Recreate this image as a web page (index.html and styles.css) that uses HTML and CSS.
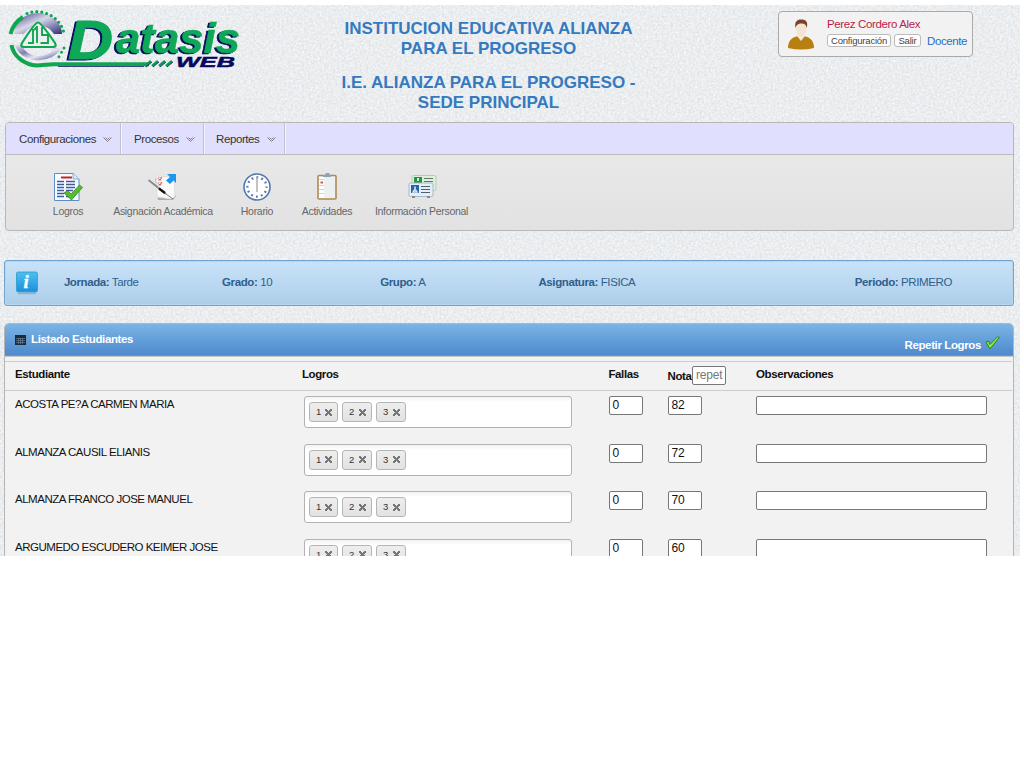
FILE: index.html
```html
<!DOCTYPE html>
<html lang="es">
<head>
<meta charset="utf-8">
<title>Datasis Web</title>
<link rel="stylesheet" href="styles.css">
</head>
<body>
<div class="page">
<svg class="texture" width="1020" height="551"><filter id="grain" x="0" y="0" width="100%" height="100%" color-interpolation-filters="sRGB"><feTurbulence type="fractalNoise" baseFrequency="0.45" numOctaves="2" seed="4"/><feColorMatrix values="0.14 0 0 0 0.850  0.14 0 0 0 0.860  0.14 0 0 0 0.868  0 0 0 0 1"/></filter><rect width="1020" height="551" filter="url(#grain)"/></svg>
<header class="top">
  <svg class="logo" width="250" height="70" viewBox="0 5 250 70">
    <defs><linearGradient id="steel" x1="0" y1="0" x2="1" y2="1"><stop offset="0" stop-color="#3a3a82"/><stop offset=".45" stop-color="#d8d8ea"/><stop offset="1" stop-color="#2c2c78"/></linearGradient>
    <linearGradient id="steel2" x1="0" y1="0" x2="1" y2="1"><stop offset="0" stop-color="#e4e2ee"/><stop offset=".35" stop-color="#8080b0"/><stop offset=".6" stop-color="#e4e4f2"/><stop offset="1" stop-color="#34347c"/></linearGradient></defs>
    <path d="M14 34A24 21 0 0 1 62 34H54A17 15 0 0 0 24 34Z" fill="url(#steel)"/>
    <path d="M15 45H22A17 14 0 0 0 54 48L61 48A24 19 0 0 1 15 45Z" fill="url(#steel2)"/>
    <path d="M10.500 34A28 28 0 0 1 23 17" fill="none" stroke="#10a650" stroke-width="4"/>
    <path d="M11.500 45A28 24 0 0 0 37 65.500Q46 64.500 54 64.200H149" fill="none" stroke="#10a650" stroke-width="4"/>
    <path d="M58 66.500H144" stroke="#07075f" stroke-width=".7"/>
    <path d="M27 13.500A28 28 0 0 1 64 33" fill="none" stroke="#10a650" stroke-width="3.200" stroke-dasharray="0 5" stroke-linecap="round"/>
    <path d="M64 48L57 60" stroke="#10a650" stroke-width="3" stroke-dasharray="0 5" stroke-linecap="round"/>
    <path d="M38 22.500Q41 22.500 55 43Q57 47 53 47H24Q20 47 22 43Q35 22.500 38 22.500Z" fill="#eceef0" stroke="#10a650" stroke-width="2.200" stroke-linejoin="round"/>
    <path d="M28 43H33V29M37 43V26M40.500 43H48V35H42V27M37 27L34 30" fill="none" stroke="#10a650" stroke-width="1.900"/>
    <path d="M145 66l6-5M152 66l6-5M159 66l6-5M166 66l6-5" stroke="#0d9b54" stroke-width="2.600"/>
    <path d="M146 67l6-5M153 67l6-5M160 67l6-5M167 67l6-5" stroke="#07075f" stroke-width=".8"/>
    <g font-family="Liberation Sans" font-weight="bold" font-style="italic">
    <g class="brand" fill="#0fa758" stroke="#0fa758"><text x="68" y="59" font-size="56" textLength="45" lengthAdjust="spacingAndGlyphs">D</text><text x="116" y="53" font-size="42" stroke-width=".6" textLength="124" lengthAdjust="spacingAndGlyphs">atasis</text></g>
    <text x="176" y="67" font-size="15.500" fill="#07075f" stroke="#07075f" stroke-width=".5" textLength="59" lengthAdjust="spacingAndGlyphs">WEB</text></g>
  </svg>
  <div class="school"><h1>INSTITUCION EDUCATIVA ALIANZA<br>PARA EL PROGRESO</h1><h1>I.E. ALIANZA PARA EL PROGRESO -<br>SEDE PRINCIPAL</h1></div>
  <div class="user">
    <svg class="avatar" width="26" height="31" viewBox="0 0 26 31"><path d="M0 29C0 20 6 18 10 17H16C20 18 26 20 26 29Q13 32 0 29Z" fill="#b8800e"/><path d="M9 17L13 22L17 17Z" fill="#f3e9d9"/><ellipse cx="13.200" cy="9.500" rx="5.300" ry="8" fill="#f5e3d6"/><path d="M7.500 9C6 2 10 0 14 .5C19 1 20 4 18.700 9C18 5 16 4 12 4.500C9 5 8 7 7.500 9Z" fill="#7b4326"/></svg>
    <div class="who"><div class="name">Perez Cordero Alex</div><div class="acts"><span class="btn b1">Configuración</span><span class="btn b2">Salir</span><span class="role">Docente</span></div></div>
  </div>
</header>
<section class="menu">
  <nav class="tabs">
    <div class="tab t1"><span>Configuraciones</span><svg width="9" height="6" viewBox="0 0 9 6"><path d="M.5 .5L4.500 4.500L8.500 .5M2.500 .5L4.500 2.500L6.500 .5" fill="none" stroke="#666" stroke-width=".8"/></svg></div>
    <div class="tab t2"><span>Procesos</span><svg width="9" height="6" viewBox="0 0 9 6"><path d="M.5 .5L4.500 4.500L8.500 .5M2.500 .5L4.500 2.500L6.500 .5" fill="none" stroke="#666" stroke-width=".8"/></svg></div>
    <div class="tab t3"><span>Reportes</span><svg width="9" height="6" viewBox="0 0 9 6"><path d="M.5 .5L4.500 4.500L8.500 .5M2.500 .5L4.500 2.500L6.500 .5" fill="none" stroke="#666" stroke-width=".8"/></svg></div>
  </nav>
  <div class="tools">
    <div class="tool w1"><svg width="30" height="30" viewBox="0 0 30 30"><path d="M1.500 1.500H20L26 7V28.500H1.500Z" fill="#f7fbff" stroke="#5d8fc4"/><path d="M20 1.500V7H26" fill="#dbe8f5" stroke="#8aacd0"/><path d="M8 5.500H19" stroke="#c22" stroke-width="2"/><path d="M4 9.500H11M13 9.500H22M4 12.500H11M13 12.500H22M4 15.500H11M13 15.500H22M4 18.500H11M13 18.500H20M4 21.500H11M13 21.500H16M4 24.500H11M13 24.500H16" stroke="#3f5b98" stroke-width="1.300"/><path d="M11 21L14.500 18.500L18 22L26.500 13L29.500 15.500L18.500 28Z" fill="#56bd2e" stroke="#26831c" stroke-width=".7"/></svg><span>Logros</span></div>
    <div class="tool w2"><svg width="30" height="30" viewBox="0 0 30 30"><path d="M7 6L10 28L25 28L28 24Z" fill="#aaa"/><path d="M8 4L26 5L27 24L24 27L9 25Z" fill="#fafafa" stroke="#ddd"/><path d="M10 5.500h3v3h-3zM10 10.500h3v3h-3z" fill="#fff" stroke="#d9a8a8" stroke-width=".8"/><path d="M10.500 6.500l1.500 1.500L14 5M10.500 11.500l1.500 1.500L14 10" fill="none" stroke="#c33" stroke-width=".8"/><path d="M.5 8L18 22" stroke="#888" stroke-width="1.800"/><path d="M11 16.500L17 21" stroke="#111" stroke-width="2.200"/><path d="M18 22L25 27" stroke="#777"/><path d="M19 2H28V11L25.500 8.500L22 12L18 8.500L22 5Z" fill="#2095ea"/></svg><span>Asignación Académica</span></div>
    <div class="tool w3"><svg width="30" height="30" viewBox="0 0 30 30"><circle cx="15" cy="15" r="13" fill="#fff" stroke="#5378a9" stroke-width="1.600"/><circle cx="15" cy="15" r="9.600" fill="none" stroke="#547abf" stroke-width="2.300" stroke-dasharray="1.900 3.126" stroke-dashoffset=".9"/><path d="M15 5V20" stroke="#aaa" stroke-width="1.400"/></svg><span>Horario</span></div>
    <div class="tool w4"><svg width="30" height="30" viewBox="0 0 30 30"><rect x="6" y="3.500" width="18" height="23.500" rx="1" fill="#eeeff1" stroke="#b08a50" stroke-width="1.600"/><path d="M12 5V26H7V5Z" fill="#fff"/><path d="M7 7.500h5M7 13.500h5M7 17.500h5M7 21.500h5" stroke="#edcda9"/><path d="M8.500 10.500h2.500" stroke="#d4564a" stroke-width="2"/><path d="M11 5V3h2l1-2h3l1 2h1v2Z" fill="#90a0b8"/></svg><span>Actividades</span></div>
    <div class="tool w5"><svg width="30" height="30" viewBox="0 0 30 30"><rect x="5" y="3.500" width="24" height="15" rx="1.500" fill="#dcefdd" stroke="#b3cdb7"/><path d="M7 5h8v7H7z" fill="#249347"/><path d="M11 6v3" stroke="#d8efdc" stroke-width="2"/><path d="M17 6.500h9M17 9.500h9M20 12.500h6" stroke="#67776b" stroke-width="1.200"/><rect x="2" y="11" width="24" height="13.500" rx="1.500" fill="#e5eef6" stroke="#a7b9ca"/><path d="M4 13h8v8H4z" fill="#2464ae"/><path d="M6 20q2-4 4 0zM8 14.500v3" stroke="#d9e6f3" stroke-width="1.600"/><path d="M14 14.500h9M14 17.500h9M14 20.500h9" stroke="#4e6070" stroke-width="1.200"/><path d="M5 25h3M20 25h3" stroke="#888" stroke-width="1.800"/></svg><span>Información Personal</span></div>
  </div>
</section>
<section class="info">
  <svg width="24" height="26" viewBox="0 0 24 26"><defs><linearGradient id="ib" x2="0" y2="1"><stop stop-color="#4cc0f0"/><stop offset="1" stop-color="#1c8fdc"/></linearGradient></defs><path d="M3 22.500H21" stroke="#94afc6" stroke-width="1.500"/><rect x="1.500" y="1" width="21" height="20" rx="1.500" fill="url(#ib)" stroke="#3e9ed0"/><text x="8.500" y="17.500" font-family="Liberation Serif" font-weight="bold" font-style="italic" font-size="19" fill="#fff" stroke="#fff" stroke-width=".4">i</text></svg>
  <div class="facts"><span><b>Jornada:</b> Tarde</span><span><b>Grado:</b> 10</span><span><b>Grupo:</b> A</span><span><b>Asignatura:</b> FISICA</span><span></span><span><b>Periodo:</b> PRIMERO</span></div>
</section>
<section class="panel">
  <div class="phead"><svg width="11" height="10" viewBox="0 0 11 10"><path d="M0 0H11V10H0Z" fill="#1d2a38"/><path d="M1 3.500H10M1 5.500H10M1 7.500H10M3.500 3V9M5.500 3V9M7.500 3V9" stroke="#7089a5" stroke-width=".6"/></svg><b>Listado Estudiantes</b><span class="rep">Repetir Logros</span><svg class="ok" width="15" height="14" viewBox="0 0 15 14"><path d="M1 6L3.500 5L5 8.500L12.500 .8L14.300 1.500L5 12.800Z" fill="#8ef03c" stroke="#25851d"/></svg></div>
  <div class="row head"><b>Estudiante</b><b class="lg">Logros</b><b>Fallas</b><div class="nota"><b>Nota</b><div class="field gray">repet</div></div><b>Observaciones</b></div>
  <div class="row"><span class="st">ACOSTA PE?A CARMEN MARIA</span><div class="tags"><i>1<em></em></i><i>2<em></em></i><i>3<em></em></i></div><div class="field">0</div><div class="field">82</div><div class="field obs"></div></div>
  <div class="row"><span class="st">ALMANZA CAUSIL ELIANIS</span><div class="tags"><i>1<em></em></i><i>2<em></em></i><i>3<em></em></i></div><div class="field">0</div><div class="field">72</div><div class="field obs"></div></div>
  <div class="row"><span class="st">ALMANZA FRANCO JOSE MANUEL</span><div class="tags"><i>1<em></em></i><i>2<em></em></i><i>3<em></em></i></div><div class="field">0</div><div class="field">70</div><div class="field obs"></div></div>
  <div class="row"><span class="st">ARGUMEDO ESCUDERO KEIMER JOSE</span><div class="tags"><i>1<em></em></i><i>2<em></em></i><i>3<em></em></i></div><div class="field">0</div><div class="field">60</div><div class="field obs"></div></div>
</section>
</div>
</body>
</html>
```
FILE: styles.css
```css
* { box-sizing: border-box; }
html, body { margin: 0; background: #fff; }
body { padding-top: 5px; height: 768px; overflow: hidden; }
.page { position: relative; width: 1020px; height: 551px; overflow: hidden; background: #e9ebed; font-family: "Liberation Sans", Arial, sans-serif; font-size: 11.500px; letter-spacing: -.2px; color: #111; white-space: nowrap; }
.texture { position: absolute; left: 0; top: 0; }
.top, .menu, .info, .panel { position: relative; }
.top { display: flex; height: 117px; }
.logo { flex: none; letter-spacing: 0; }
.brand { filter: drop-shadow(-2px 1.500px 0 #07075f); }
.school { width: 477px; margin-right: 1px; padding-top: 14px; text-align: center; letter-spacing: 0; }
.school h1 { margin: 0 0 14px; font-size: 17px; line-height: 20px; font-weight: bold; color: #357abf; }
.user { display: flex; width: 195px; height: 46px; margin: 6px 0 0 50px; border: 1px solid #aaa; border-radius: 4px; background: #f2f2f2; padding: 7px 0 0 9px; }
.who { margin-left: 13px; }
.name { font-size: 11.500px; line-height: 13px; letter-spacing: -.36px; color: #b81e4c; margin-top: -1px; }
.acts { display: flex; align-items: center; margin-top: 3px; }
.btn { font-size: 9.500px; line-height: 11px; letter-spacing: -.2px; height: 13px; border: 1px solid #bbb; border-radius: 3px; background: #fff; color: #444; text-align: center; margin-right: 3px; }
.b1 { width: 64px; }
.b2 { width: 27px; }
.role { color: #2670c2; font-size: 11.500px; margin-left: 3px; letter-spacing: -.4px; }
.menu { width: 1009px; height: 109px; margin-left: 5px; border: 1px solid #b8b8b8; border-radius: 4px; background: linear-gradient(#ebebeb, #e2e2e2); overflow: hidden; }
.tabs { display: flex; height: 32px; background: #e0e0fe; border-bottom: 1px solid #bbb; }
.tab { display: flex; align-items: center; justify-content: space-between; padding: 0 8px 0 13px; border-right: 1px solid #c2c2cc; box-shadow: 1px 0 #f4f4ff; color: #333; letter-spacing: -.4px; }
.tab svg { margin-top: 3px; }
.t1 { width: 115px; } .t2 { width: 83px; } .t3 { width: 81px; padding-left: 12px; }
.tools { display: flex; padding: 17px 0 0 39px; }
.tool { display: flex; flex-direction: column; align-items: center; font-size: 10.500px; line-height: 13px; letter-spacing: -.3px; color: #666; }
.tool span { margin-top: 3px; }
.w1 { width: 46px; } .w2 { width: 144px; } .w3 { width: 44px; } .w4 { width: 96px; } .w5 { width: 93px; }
.info { display: flex; width: 1010px; height: 46px; margin: 29px 0 0 4px; padding: 10px 0 0 10px; border: 1px solid #6fa3d0; border-radius: 3px; background: linear-gradient(#c8e3f9, #adcde8); box-shadow: inset 0 0 0 1px #b5d6f0; color: #2f5f8d; letter-spacing: -.4px; }
.facts { display: grid; grid-template-columns: repeat(6, 158.200px); margin-left: 25px; line-height: 22px; }
.panel { width: 1010px; height: 300px; margin: 17px 0 0 4px; border: 1px solid #b5b5b5; border-radius: 5px 5px 0 0; background: #f2f2f2; }
.phead { display: flex; height: 32px; padding: 0 13px 0 10px; border-bottom: 1px solid #6c94c0; border-radius: 4px 4px 0 0; background: linear-gradient(#7cb4e6, #4e8acd); box-shadow: 0 1px #c5c5c5; color: #fff; line-height: 30px; letter-spacing: -.38px; }
.phead > svg:first-child { margin: 11px 5px 0 0; }
.rep { margin-left: auto; padding-top: 6px; font-weight: bold; }
.ok { margin: 12px 0 0 4px; }
.row { display: grid; grid-template-columns: 289px 304.500px 59px 88.500px 231px; align-items: start; padding-left: 10px; height: 47.600px; line-height: 14px; }
.head { height: 30px; margin: 5px 1px 5px 0; border-top: 1px solid #ccc; border-bottom: 1px solid #ccc; padding-top: 5px; letter-spacing: -.4px; }
.lg { margin-left: -2px; }
.nota { display: flex; align-items: center; margin-top: -1px; }
.nota b { width: 24.500px; padding-top: 1px; }
.tags { display: flex; gap: 4px; width: 268px; height: 32px; padding: 5px 4px; border: 1px solid #b2b2b2; border-radius: 3px; background: linear-gradient(#f3f3f3, #fff 5px); }
.tags i { display: flex; align-items: center; justify-content: space-between; width: 30px; height: 20px; padding: 0 5px 0 6px; border: 1px solid #b5b5b5; border-radius: 3px; background: linear-gradient(#eee, #e2e2e2); font-style: normal; font-size: 9.500px; letter-spacing: 0; color: #333; }
.tags i:first-child { width: 29px; }
.tags em { width: 7px; height: 7px; background: linear-gradient(45deg, transparent 38%, #777 38% 62%, transparent 62%), linear-gradient(-45deg, transparent 38%, #777 38% 62%, transparent 62%); }
.st { letter-spacing: -.48px; padding-top: 1px; }
.field { width: 34px; height: 19px; border: 1px solid #777; border-radius: 2px; background: #fff; padding: 0 3px; line-height: 17px; font-size: 12px; letter-spacing: -.2px; }
.field.obs { width: 231px; }
.gray { color: #777; }
```
